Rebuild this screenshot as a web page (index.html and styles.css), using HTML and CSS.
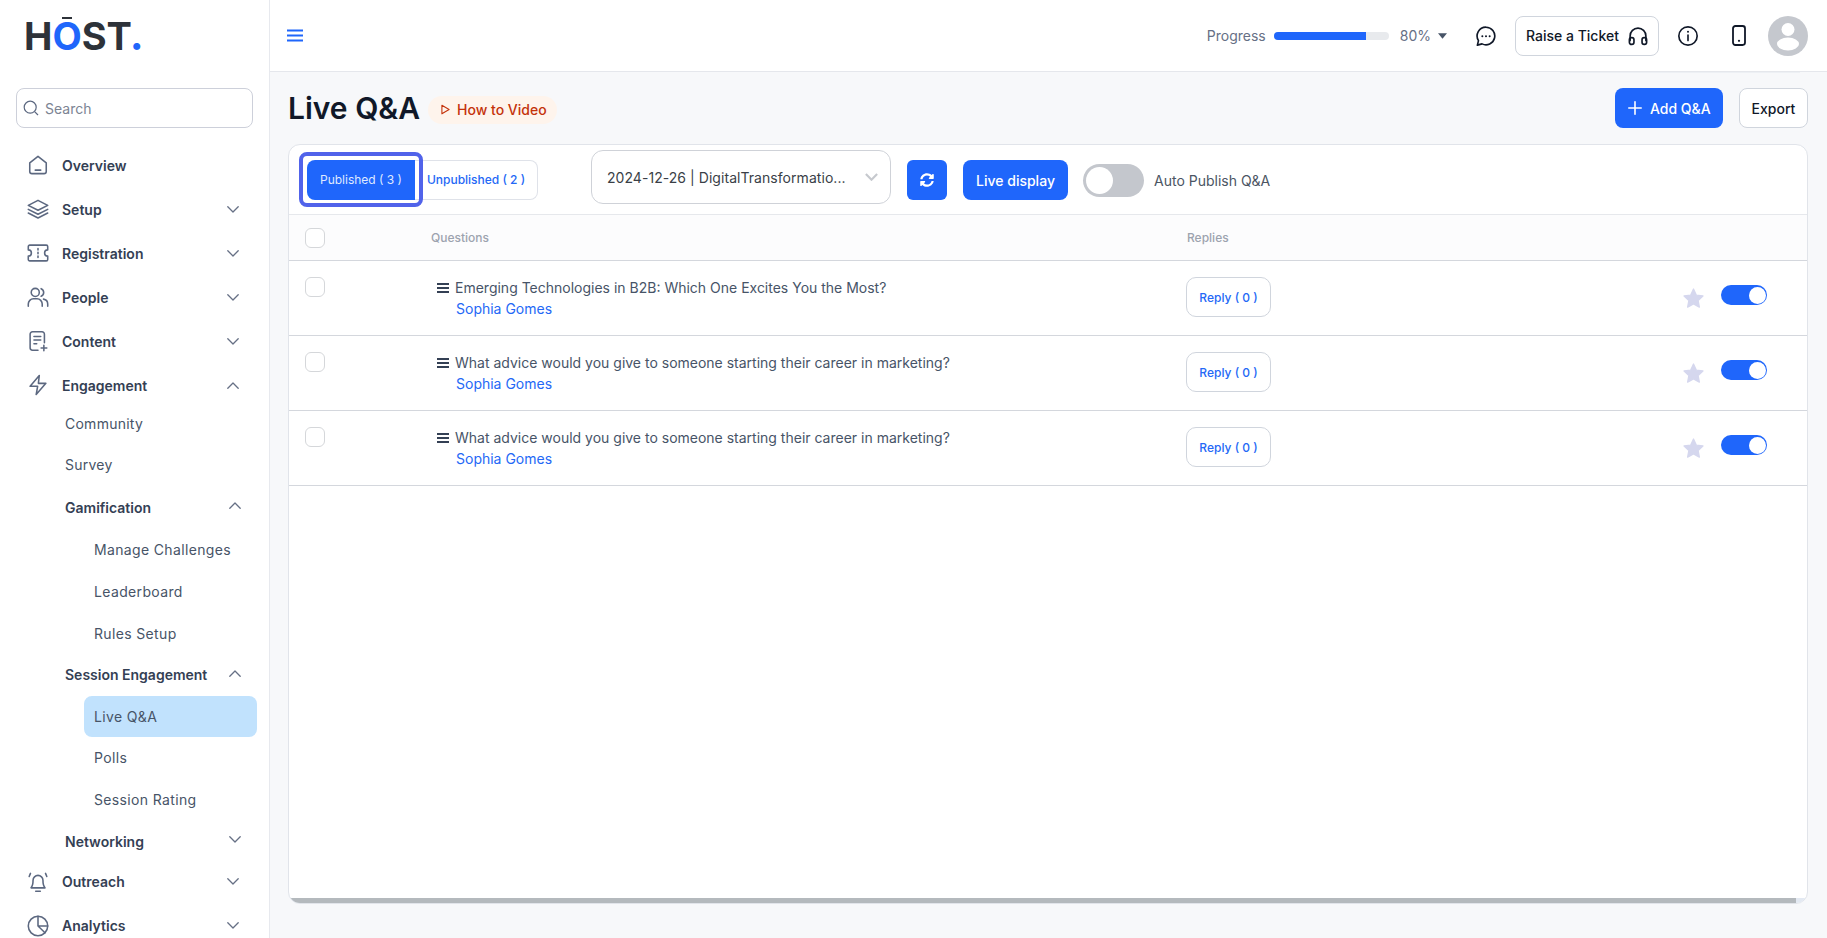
FILE: index.html
```html
<!DOCTYPE html>
<html lang="en">
<head>
<meta charset="utf-8">
<title>Live Q&amp;A</title>
<link rel="stylesheet" href="styles.css">
</head>
<body>
<div class="app">
  <aside class="sidebar">
    <div class="logo">H<span class="logo-o">O</span>ST<span class="logo-dot">.</span></div>
    <label class="search">
      <svg class="search-icon" viewBox="0 0 16 16"><circle cx="7.2" cy="7.2" r="6"/><path d="M11.6 11.6 15 15"/></svg>
      <span>Search</span>
    </label>
    <nav class="nav">
      <a class="nav-item"><svg class="nav-icon" viewBox="0 0 24 24"><path d="M3 9.8 12 2.6l9 7.2V19a2.4 2.4 0 0 1-2.4 2.4H5.4A2.4 2.4 0 0 1 3 19Z"/><path d="M9 17.6h6"/></svg><span>Overview</span></a>
      <a class="nav-item"><svg class="nav-icon" viewBox="0 0 24 24"><path d="M12 2.600 22.600 8 12 13.400 1.400 8Z"/><path d="M1.400 12.400 12 17.800l10.600-5.400"/><path d="M1.400 16.400 12 21.800l10.600-5.400"/></svg><span>Setup</span><svg class="chev" viewBox="0 0 12 7"><path d="M.8.8 6 6l5.2-5.2"/></svg></a>
      <a class="nav-item"><svg class="nav-icon" viewBox="0 0 24 24"><path d="M3 3.400h18a1.600 1.600 0 0 1 1.600 1.600v3.600a3.400 3.400 0 0 0 0 6.800V19a1.600 1.600 0 0 1-1.600 1.600H3A1.600 1.600 0 0 1 1.400 19v-3.600a3.400 3.400 0 0 0 0-6.800V5A1.600 1.600 0 0 1 3 3.400Z"/><path d="M12 7v1.600M12 11.200v1.600M12 15.400V17"/></svg><span>Registration</span><svg class="chev" viewBox="0 0 12 7"><path d="M.8.8 6 6l5.2-5.2"/></svg></a>
      <a class="nav-item"><svg class="nav-icon" viewBox="0 0 24 24"><circle cx="9" cy="7" r="4.400"/><path d="M15.400 2.900a4.400 4.400 0 0 1 0 8.200"/><path d="M1.400 22v-2.400a5.600 5.600 0 0 1 5.600-5.600h4a5.600 5.600 0 0 1 5.600 5.600V22"/><path d="M18 14.300a5.600 5.600 0 0 1 4.600 5.400V22"/></svg><span>People</span><svg class="chev" viewBox="0 0 12 7"><path d="M.8.8 6 6l5.2-5.2"/></svg></a>
      <a class="nav-item"><svg class="nav-icon" viewBox="0 0 24 24"><path d="M12 22H6a2.600 2.600 0 0 1-2.600-2.600V4.600A2.600 2.600 0 0 1 6 2h10.400A2.600 2.600 0 0 1 19 4.600V14"/><path d="M7.600 7h7.400M7.600 11h7.400M7.600 15h3"/><path d="M18.400 16.600v6M15.400 19.600h6.200"/></svg><span>Content</span><svg class="chev" viewBox="0 0 12 7"><path d="M.8.8 6 6l5.2-5.2"/></svg></a>
      <a class="nav-item"><svg class="nav-icon" viewBox="0 0 24 24"><path d="M13.400 1.600 3.400 13.400h8.200L10 22.400l10.600-12.200h-8.200Z"/></svg><span>Engagement</span><svg class="chev" viewBox="0 0 12 7"><path d="M.8 6.200 6 1l5.200 5.200"/></svg></a>
      <div class="sub-list">
        <a class="sub-item sub-plain">Community</a>
        <a class="sub-item sub-plain">Survey</a>
        <a class="sub-item sub-head">Gamification<svg class="chev" viewBox="0 0 12 7"><path d="M.8 6.200 6 1l5.200 5.200"/></svg></a>
        <a class="leaf">Manage Challenges</a>
        <a class="leaf">Leaderboard</a>
        <a class="leaf">Rules Setup</a>
        <a class="sub-item sub-head">Session Engagement<svg class="chev" viewBox="0 0 12 7"><path d="M.8 6.200 6 1l5.200 5.200"/></svg></a>
        <a class="leaf leaf-active">Live Q&amp;A</a>
        <a class="leaf">Polls</a>
        <a class="leaf">Session Rating</a>
        <a class="sub-item sub-head">Networking<svg class="chev" viewBox="0 0 12 7"><path d="M.8.8 6 6l5.2-5.2"/></svg></a>
      </div>
      <a class="nav-item nav-after"><svg class="nav-icon" viewBox="0 0 24 24"><path d="M4.400 18.400c1.600-1.800 2.200-3.800 2.200-8.200a5.400 5.400 0 0 1 10.800 0c0 4.400.6 6.400 2.200 8.200Z"/><path d="M9.500 22h5"/><path d="M3.800 2.600 2.400 6M20.200 2.600 21.600 6"/></svg><span>Outreach</span><svg class="chev" viewBox="0 0 12 7"><path d="M.8.8 6 6l5.2-5.2"/></svg></a>
      <a class="nav-item"><svg class="nav-icon" viewBox="0 0 24 24"><circle cx="12" cy="12" r="10.600"/><path d="M12 1.400V12l7.600 7.400M12 12h10.600"/></svg><span>Analytics</span><svg class="chev" viewBox="0 0 12 7"><path d="M.8.8 6 6l5.2-5.2"/></svg></a>
    </nav>
  </aside>

  <div class="main">
    <header class="topbar">
      <svg class="burger" viewBox="0 0 16 13"><path d="M.5 1.500h15M.5 6.500h15M.5 11.500h15"/></svg>
      <div class="top-right">
        <span class="progress-label">Progress</span>
        <div class="progress-track"><div class="progress-fill"></div></div>
        <span class="progress-value">80%</span>
        <svg class="caret" viewBox="0 0 10 6"><path d="M0 0h10L5 6Z"/></svg>
        <svg class="chat-icon top-icon" viewBox="0 0 24 24"><path d="M12 2.400a9.600 9.600 0 1 1-4.300 18.200L2.600 22l1.200-4.900A9.600 9.600 0 0 1 12 2.400Z"/><path class="dots" d="M8 12.200h.01M12 12.200h.01M16 12.200h.01"/></svg>
        <button class="ticket">Raise a Ticket<svg class="ticket-icon top-icon" viewBox="0 0 24 24"><path d="M3.400 17v-5a8.600 8.600 0 0 1 17.200 0v5"/><rect x="2.600" y="13.800" width="5" height="7.400" rx="2.300"/><rect x="16.400" y="13.800" width="5" height="7.400" rx="2.300"/></svg></button>
        <svg class="info-icon top-icon" viewBox="0 0 24 24"><circle cx="12" cy="12" r="10"/><path d="M12 11v6"/><path class="dots" d="M12 7.300h.01"/></svg>
        <svg class="phone-icon top-icon" viewBox="0 0 14 21"><rect x="1" y="1" width="12" height="19" rx="2.400"/><path class="dots" d="M7 15.800h.01"/></svg>
        <div class="avatar"><svg viewBox="0 0 40 40"><circle cx="20" cy="13.500" r="6.500"/><ellipse cx="20" cy="28" rx="11" ry="6.500"/></svg></div>
      </div>
      <div class="top-shade"></div>
    </header>

    <section class="content">
      <div class="page-head">
        <h1>Live Q&amp;A</h1>
        <a class="howto"><svg viewBox="0 0 10 12"><path d="M1 1.200 9 6l-8 4.800Z"/></svg>How to Video</a>
        <button class="btn-add"><svg viewBox="0 0 14 14"><path d="M7 .8v12.400M.8 7h12.400"/></svg>Add Q&amp;A</button>
        <button class="btn-export">Export</button>
      </div>

      <div class="card">
        <div class="toolbar">
          <div class="tabs">
            <button class="tab tab-on">Published ( 3 )</button>
            <button class="tab tab-off">Unpublished ( 2 )</button>
          </div>
          <div class="select"><span>2024-12-26 | DigitalTransformatio...</span><svg viewBox="0 0 12 7"><path d="M.8.8 6 6l5.200-5.200"/></svg></div>
          <button class="btn-refresh"><svg viewBox="0 0 512 512"><path d="M370.700 133.300C339.500 104 298.900 88 255.800 88c-77.500.100-144.300 53.200-162.800 126.900-1.300 5.400-6.100 9.100-11.600 9.100H24.100c-7.500 0-13.200-6.800-11.800-14.200C33.900 94.900 134.800 8 256 8c66.400 0 126.800 26.100 171.300 68.700L463 41C478.100 25.900 504 36.600 504 57.900V192c0 13.300-10.700 24-24 24H345.900c-21.400 0-32.100-25.900-17-41zM32 296h134.100c21.400 0 32.100 25.900 17 41l-41.800 41.800c31.300 29.300 71.800 45.300 114.900 45.200 77.400-.100 144.300-53.100 162.800-126.800 1.300-5.400 6.100-9.100 11.600-9.100h57.300c7.500 0 13.200 6.800 11.800 14.200C478.100 417.100 377.200 504 256 504c-66.400 0-126.800-26.100-171.300-68.700L49 471c-15.100 15.100-41 4.400-41-17V320c0-13.300 10.700-24 24-24z"/></svg></button>
          <button class="btn-live">Live display</button>
          <div class="switch-off"><span></span></div>
          <span class="auto-label">Auto Publish Q&amp;A</span>
        </div>

        <div class="table">
          <div class="t-head">
            <span class="check"></span>
            <span class="th">Questions</span>
            <span class="th">Replies</span>
          </div>

          <div class="t-row">
            <span class="check"></span>
            <div class="q-cell">
              <div class="q-line"><svg class="grip" viewBox="0 0 12 10"><path d="M0 1h12M0 5h12M0 9h12"/></svg>Emerging Technologies in B2B: Which One Excites You the Most?</div>
              <a class="q-author">Sophia Gomes</a>
            </div>
            <button class="btn-reply">Reply ( 0 )</button>
            <div class="row-actions">
              <svg class="star" viewBox="0 0 24 24"><path d="M12 1.200l3.300 7 7.500.9-5.500 5.200 1.400 7.500L12 18.100l-6.700 3.700 1.400-7.500L1.200 9.100l7.500-.9Z"/></svg>
              <div class="switch-on"><span></span></div>
            </div>
          </div>

          <div class="t-row">
            <span class="check"></span>
            <div class="q-cell">
              <div class="q-line"><svg class="grip" viewBox="0 0 12 10"><path d="M0 1h12M0 5h12M0 9h12"/></svg>What advice would you give to someone starting their career in marketing?</div>
              <a class="q-author">Sophia Gomes</a>
            </div>
            <button class="btn-reply">Reply ( 0 )</button>
            <div class="row-actions">
              <svg class="star" viewBox="0 0 24 24"><path d="M12 1.200l3.300 7 7.500.9-5.500 5.200 1.400 7.500L12 18.100l-6.700 3.700 1.400-7.500L1.200 9.100l7.500-.9Z"/></svg>
              <div class="switch-on"><span></span></div>
            </div>
          </div>

          <div class="t-row">
            <span class="check"></span>
            <div class="q-cell">
              <div class="q-line"><svg class="grip" viewBox="0 0 12 10"><path d="M0 1h12M0 5h12M0 9h12"/></svg>What advice would you give to someone starting their career in marketing?</div>
              <a class="q-author">Sophia Gomes</a>
            </div>
            <button class="btn-reply">Reply ( 0 )</button>
            <div class="row-actions">
              <svg class="star" viewBox="0 0 24 24"><path d="M12 1.200l3.300 7 7.500.9-5.500 5.200 1.400 7.500L12 18.100l-6.700 3.700 1.400-7.500L1.200 9.100l7.500-.9Z"/></svg>
              <div class="switch-on"><span></span></div>
            </div>
          </div>
        </div>

        <div class="hscroll"><div class="hscroll-thumb"></div></div>
      </div>
    </section>
  </div>
</div>
</body>
</html>
```
FILE: styles.css
```css
* { box-sizing: border-box; }
html, body { margin: 0; height: 100%; }
body {
  font-family: Inter, "Noto Sans", sans-serif;
  font-size: 14px;
  color: #344054;
  background: #f7f8fa;
  overflow: hidden;
}
button { font-family: inherit; cursor: pointer; }
svg { display: block; flex: none; }

.app { display: flex; height: 938px; overflow: hidden; }

/* Sidebar */
.sidebar {
  width: 270px;
  flex: none;
  background: #fff;
  border-right: 1px solid #e7e9ee;
  overflow: hidden;
  padding: 0 12px 0 16px;
}
.logo {
  height: 88px;
  padding: 13px 0 0 8px;
  font-size: 38px;
  line-height: 47px;
  font-weight: 700;
  letter-spacing: 0;
  color: #2d3239;
}
.logo-o { position: relative; color: #1f66fb; }
.logo-o::before {
  content: "";
  position: absolute;
  left: 10px;
  right: 10px;
  top: 4px;
  height: 2px;
  background: #2d3239;
}
.logo-dot { color: #1f66fb; font-weight: 800; margin-left: -2px; }

.search {
  display: flex;
  align-items: center;
  gap: 6px;
  width: 237px;
  height: 40px;
  padding: 0 6px;
  border: 1px solid #cdd0da;
  border-radius: 8px;
  color: #7c8493;
  font-size: 14px;
}
.search-icon { width: 16px; height: 16px; fill: none; stroke: #5c6880; stroke-width: 1.2; }

.nav { margin-top: 15px; }
.nav-item {
  display: flex;
  align-items: center;
  height: 44px;
  padding-left: 11px;
  font-weight: 600;
  font-size: 14px;
  color: #344054;
  position: relative;
}
.nav-icon {
  width: 22px;
  height: 22px;
  margin-right: 13px;
  fill: none;
  stroke: #5c6880;
  stroke-width: 1.7;
  stroke-linecap: round;
  stroke-linejoin: round;
}
.chev {
  width: 12px;
  height: 7px;
  margin-left: auto;
  fill: none;
  stroke: #667085;
  stroke-width: 1.3;
  stroke-linecap: round;
  stroke-linejoin: round;
}
.nav-item .chev { margin-right: 18px; }
.nav-after { margin-top: -2px; }

.sub-list { margin-top: -4px; }
.sub-item {
  display: flex;
  align-items: center;
  padding-left: 49px;
  padding-right: 16px;
  color: #475467;
}
.sub-plain { height: 41px; font-weight: 400; letter-spacing: .25px; }
.sub-head { height: 41.6px; font-weight: 600; color: #344054; }
.sub-head .chev { margin-top: -3px; }
.sub-plain + .sub-head { margin: 1.600px 0 1px; }
.leaf {
  display: flex;
  align-items: center;
  height: 41.6px;
  margin-left: 68px;
  margin-right: 0;
  padding-left: 10px;
  border-radius: 8px;
  color: #475467;
  letter-spacing: .35px;
}
.leaf-active { background: #c1e2fd; }

/* Main */
.main { flex: 1; min-width: 0; display: flex; flex-direction: column; }
.topbar {
  position: relative;
  display: flex;
  align-items: center;
  height: 72px;
  flex: none;
  padding: 0 19px 0 17px;
  background: #fff;
  border-bottom: 1px solid #e5e7ec;
}
.burger { width: 16px; height: 13px; fill: none; stroke: #1f66fb; stroke-width: 2; stroke-linecap: round; }
.top-right { display: flex; align-items: center; margin-left: auto; }
.progress-label { color: #667085; margin-right: 8px; }
.progress-track {
  width: 115px;
  height: 8px;
  margin-right: 11px;
  border-radius: 4px;
  background: #e8eaed;
  overflow: hidden;
}
.progress-fill { width: 80%; height: 100%; background: #1f66fb; }
.progress-value { color: #667085; margin-right: 7px; }
.caret { width: 9px; height: 6px; fill: #475467; margin-right: 28px; }
.top-icon { fill: none; stroke: #101828; stroke-width: 1.8; stroke-linecap: round; stroke-linejoin: round; }
.top-icon .dots { stroke-width: 2.200; }
.chat-icon { width: 22px; height: 22px; margin-right: 18px; }
.ticket {
  display: flex;
  align-items: center;
  gap: 8px;
  width: 144px;
  height: 40px;
  padding: 0 9px 0 10px;
  background: #fff;
  border: 1px solid #d0d5dd;
  border-radius: 8px;
  font-size: 14px;
  font-weight: 500;
  color: #101828;
  white-space: nowrap;
}
.ticket-icon { width: 22px; height: 22px; }
.info-icon { width: 22px; height: 22px; margin: 0 33px 0 18px; }
.phone-icon { width: 14px; height: 21px; margin-right: 22px; }
.avatar { width: 40px; height: 40px; border-radius: 50%; background: #c5c8ce; overflow: hidden; }
.avatar svg { width: 40px; height: 40px; fill: #fff; }
.top-shade {
  position: absolute;
  right: 27px;
  bottom: -2px;
  width: 240px;
  height: 1px;
  background: #edf0f4;
}

.content { flex: 1; padding: 16px 19px 34px 18px; display: flex; flex-direction: column; min-height: 0; }
.page-head { display: flex; align-items: center; height: 40px; flex: none; }
h1 { margin: 0 8px 0 0; font-size: 30px; font-weight: 600; color: #101828; line-height: 40px; }
.howto {
  display: flex;
  align-items: center;
  gap: 7px;
  height: 28px;
  padding: 0 10px 0 13px;
  margin-top: 3px;
  border-radius: 14px;
  background: #fef4ec;
  color: #c4320a;
  font-weight: 500;
  font-size: 14px;
}
.howto svg { width: 9px; height: 11px; fill: none; stroke: #c4320a; stroke-width: 1.200; stroke-linejoin: round; }
.btn-add {
  display: flex;
  align-items: center;
  gap: 8px;
  width: 108px;
  height: 40px;
  margin-left: auto;
  padding: 0 0 0 13px;
  background: #1f66fb;
  border: 0;
  border-radius: 8px;
  color: #fff;
  font-size: 14px;
  font-weight: 500;
}
.btn-add svg { width: 14px; height: 14px; fill: none; stroke: #fff; stroke-width: 1.600; stroke-linecap: round; }
.btn-export {
  width: 69px;
  height: 40px;
  margin-left: 16px;
  background: #fff;
  border: 1px solid #d0d5dd;
  border-radius: 8px;
  color: #101828;
  font-size: 14px;
  font-weight: 500;
}

.card {
  flex: 1;
  display: flex;
  flex-direction: column;
  min-height: 0;
  margin-top: 16px;
  background: #fff;
  border: 1px solid #e1e4ea;
  border-radius: 12px;
  overflow: hidden;
}
.toolbar {
  display: flex;
  align-items: center;
  height: 70px;
  flex: none;
  padding: 1px 0 0 18px;
  border-bottom: 1px solid #e6e8ec;
}
.tabs { display: flex; width: 231px; height: 40px; margin-right: 53px; }
.tab { height: 40px; font-size: 12px; font-weight: 400; padding: 0 0 2px; }
.tab-on {
  position: relative;
  width: 108px;
  background: #1f66fb;
  color: #dfe9ff;
  border: 0;
  border-radius: 8px 0 0 8px;
  z-index: 1;
}
.tab-on::after {
  content: "";
  position: absolute;
  inset: -8px -8px -7px;
  border: 4px solid #5163ea;
  border-radius: 8px;
}
.tab-off {
  flex: 1;
  background: #fff;
  color: #2468f6;
  border: 1px solid #dfe2e9;
  border-left: 0;
  border-radius: 0 8px 8px 0;
  font-weight: 500;
}
.select {
  display: flex;
  align-items: center;
  justify-content: space-between;
  width: 300px;
  height: 54px;
  margin: 0 16px 6px 0;
  padding: 0 12px 0 15px;
  border: 1px solid #cfd2d8;
  border-radius: 12px;
  color: #3a3f47;
  font-size: 14px;
  letter-spacing: .05px;
  white-space: nowrap;
}
.select svg { width: 13px; height: 8px; fill: none; stroke: #c6c9ce; stroke-width: 2; }
.btn-refresh {
  display: flex;
  align-items: center;
  justify-content: center;
  width: 40px;
  height: 40px;
  margin-right: 16px;
  padding: 0;
  background: #1f66fb;
  border: 0;
  border-radius: 6px;
}
.btn-refresh svg { width: 14px; height: 14px; fill: #fff; }
.btn-live {
  width: 105px;
  height: 40px;
  margin-right: 15px;
  padding: 0;
  background: #1f66fb;
  border: 0;
  border-radius: 8px;
  color: #fff;
  font-size: 14px;
  font-weight: 500;
}
.switch-off {
  width: 61px;
  height: 33px;
  margin-right: 10px;
  padding: 3px;
  border-radius: 17px;
  background: #c4c7cd;
}
.switch-off span { display: block; width: 27px; height: 27px; border-radius: 50%; background: #fff; }
.auto-label { color: #4b5563; font-size: 14px; }

.table { flex: 1; min-height: 0; }
.t-head, .t-row {
  display: grid;
  grid-template-columns: 126px 756px 1fr;
  padding-left: 16px;
  border-bottom: 1px solid #d4d7dd;
}
.t-head {
  height: 46px;
  align-items: center;
  background: #fcfcfd;
}
.t-row {
  grid-template-columns: 126px 755px 85px 1fr;
  height: 75px;
  align-items: start;
  padding-top: 16px;
}
.check {
  display: block;
  width: 20px;
  height: 20px;
  background: #fff;
  border: 1px solid #d5d7da;
  border-radius: 6px;
}
.th { font-size: 12px; font-weight: 500; color: #9ca3af; }
.q-cell { padding-left: 6px; }
.q-line { display: flex; align-items: center; gap: 6px; height: 21px; color: #475467; }
.grip { width: 12px; height: 10px; fill: none; stroke: #344054; stroke-width: 1.800; }
.q-author { display: block; margin: 0 0 0 19px; line-height: 21px; color: #2468f6; }
.btn-reply {
  width: 85px;
  height: 40px;
  padding: 0;
  background: #fff;
  border: 1px solid #d0d5dd;
  border-radius: 10px;
  color: #2468f6;
  font-size: 12px;
  font-weight: 500;
}
.row-actions { display: flex; justify-content: flex-end; align-items: flex-start; gap: 17px; padding-right: 40px; }
.star { width: 21px; height: 21px; margin-top: 11px; fill: #d5d7ee; stroke: #d5d7ee; stroke-width: 1.500; stroke-linejoin: round; }
.switch-on {
  display: flex;
  justify-content: flex-end;
  width: 46px;
  height: 20px;
  margin-top: 8px;
  padding: 1.500px;
  border-radius: 10px;
  background: #1f66fb;
}
.switch-on span { display: block; width: 17px; height: 17px; border-radius: 50%; background: #fff; }

.hscroll { display: flex; height: 5px; flex: none; background: #e3e9f2; }
.hscroll-thumb { flex: 1; margin-right: 11px; background: #b4b9bd; }
```
